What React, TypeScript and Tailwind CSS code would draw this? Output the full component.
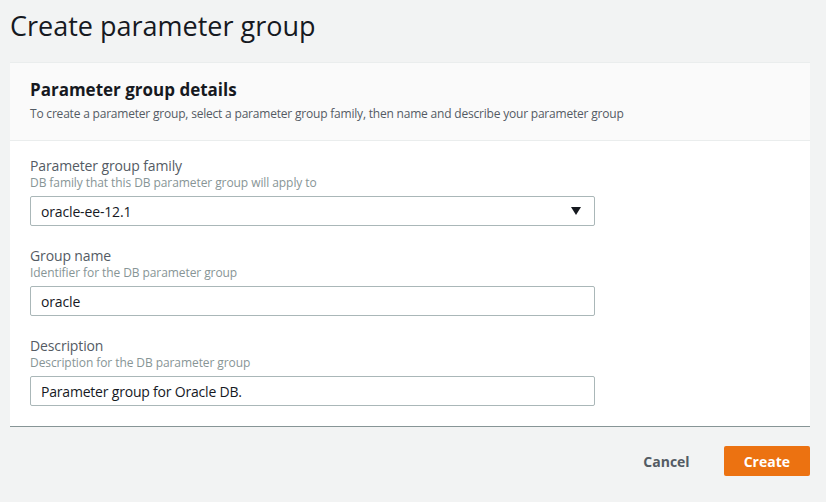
import React from "react";

export default function App() {
  const font = { fontFamily: '"Open Sans", "Noto Sans", sans-serif' };
  return (
    <div className="min-h-[502px] w-[826px] bg-[#f2f3f3] pl-[10px] pr-[16px] pt-[8px]" style={font}>
      <h1 className="text-[27px] leading-[36px] font-normal text-[#16191f]">Create parameter group</h1>

      <div className="mt-[18px] bg-white border-t border-[#eaeded] border-b border-b-[#879596]">
        <div className="bg-[#fafafa] border-b border-[#eaeded] px-5 pt-[16px] pb-[18px]">
          <h2 className="text-[17px] leading-[22px] font-bold text-[#16191f]">Parameter group details</h2>
          <p className="mt-[5px] text-[12px] leading-[16px] tracking-[-0.2px] text-[#545b64]">
            To create a parameter group, select a parameter group family, then name and describe your parameter group
          </p>
        </div>

        <div className="px-5 pt-[15px] pb-[20px] flex flex-col gap-[20px]">
          <div>
            <div className="text-[14px] leading-[19px] tracking-[-0.13px] text-[#545b64]">Parameter group family</div>
            <div className="text-[12px] leading-[16px] tracking-[-0.08px] text-[#879596]">DB family that this DB parameter group will apply to</div>
            <div className="mt-[5px] w-[565px] h-[30px] border border-[#aab7b8] rounded-[2px] flex items-center justify-between pl-[10px] pr-[13px]">
              <span className="text-[14px] tracking-[-0.15px] text-[#16191f]">oracle-ee-12.1</span>
              <svg width="10" height="8" viewBox="0 0 10 8">
                <path d="M0 0 H10 L5 8 Z" fill="#16191f" />
              </svg>
            </div>
          </div>

          <div>
            <div className="text-[14px] leading-[19px] tracking-[-0.13px] text-[#545b64]">Group name</div>
            <div className="text-[12px] leading-[16px] tracking-[-0.08px] text-[#879596]">Identifier for the DB parameter group</div>
            <div className="mt-[5px] w-[565px] h-[30px] border border-[#aab7b8] rounded-[2px] flex items-center pl-[10px]">
              <span className="text-[14px] tracking-[-0.15px] text-[#16191f]">oracle</span>
            </div>
          </div>

          <div>
            <div className="text-[14px] leading-[19px] tracking-[-0.13px] text-[#545b64]">Description</div>
            <div className="text-[12px] leading-[16px] tracking-[-0.08px] text-[#879596]">Description for the DB parameter group</div>
            <div className="mt-[5px] w-[565px] h-[30px] border border-[#aab7b8] rounded-[2px] flex items-center pl-[10px]">
              <span className="text-[14px] tracking-[-0.2px] text-[#16191f]">Parameter group for Oracle DB.</span>
            </div>
          </div>
        </div>
      </div>

      <div className="mt-[19px] flex justify-end items-center gap-[14px]">
        <button className="h-[30px] px-5 text-[14px] font-bold text-[#545b64]">Cancel</button>
        <button className="h-[30px] px-5 rounded-[2px] bg-[#ec7211] text-[14px] font-bold text-white">Create</button>
      </div>
    </div>
  );
}
